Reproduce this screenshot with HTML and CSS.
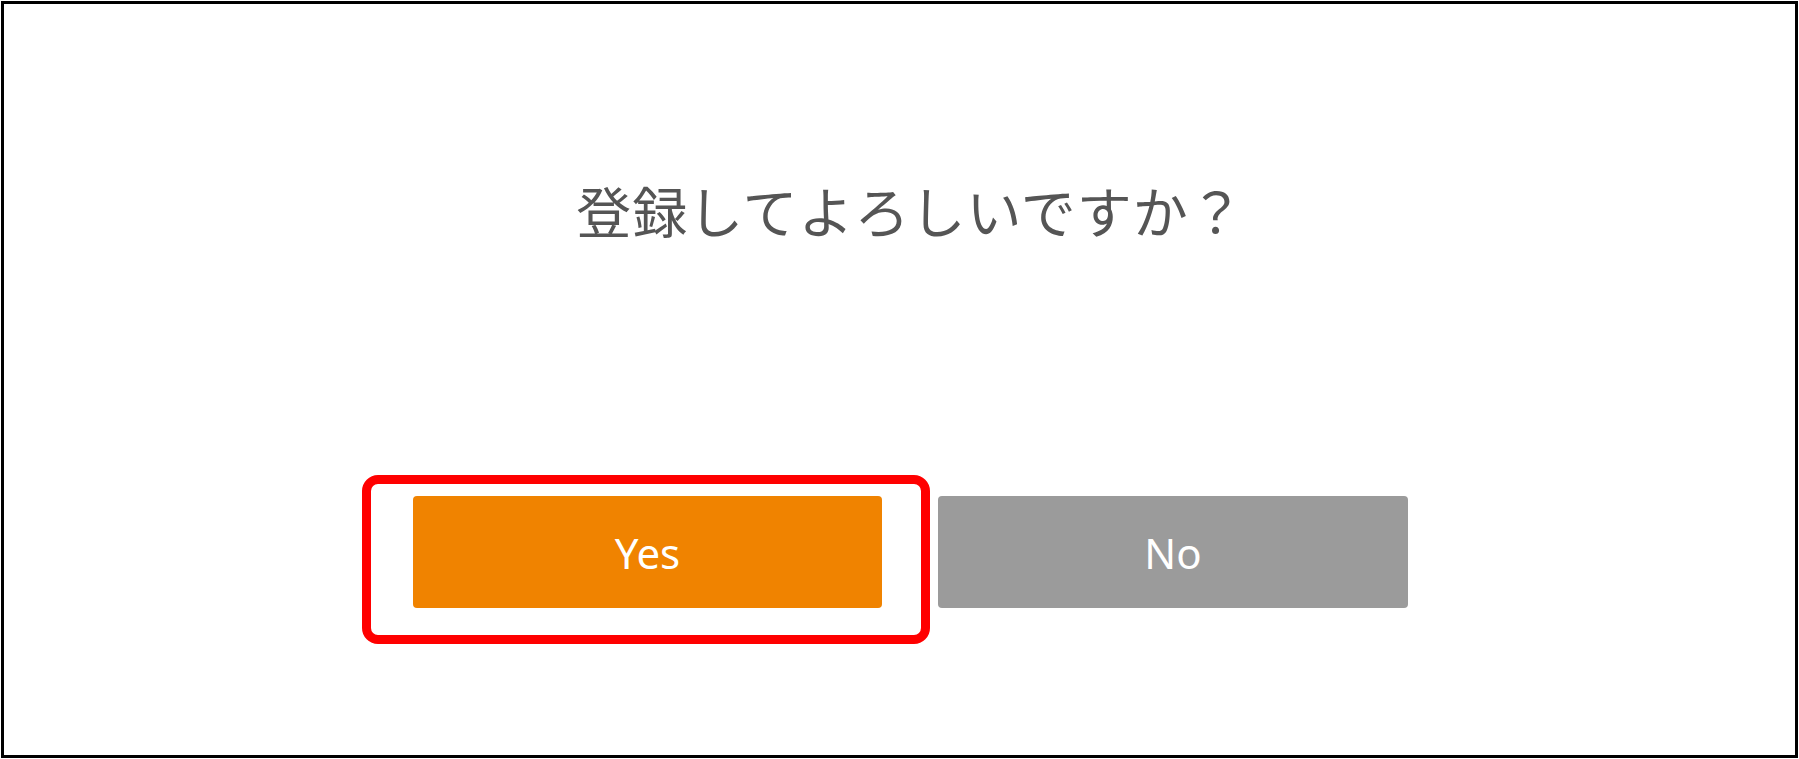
FILE: index.html
```html
<!DOCTYPE html>
<html lang="ja">
<head>
    <meta charset="UTF-8">
    <meta name="viewport" content="width=device-width, initial-scale=1.0">
    <title>登録確認</title>
    <link rel="stylesheet" href="styles.css">
</head>
<body>
    <div class="frame">
        <p class="message">登録してよろしいですか？</p>
        <div class="actions">
            <div class="btn-wrap">
                <button class="btn btn-yes" type="button">Yes</button>
                <span class="highlight"></span>
            </div>
            <button class="btn btn-no" type="button">No</button>
        </div>
    </div>
</body>
</html>
```

FILE: styles.css
```css
html, body {
    margin: 0;
    height: 100%;
    background: #fff;
}
.frame {
    box-sizing: border-box;
    height: 757px;
    margin: 1px;
    border: 3px solid #000;
    padding-left: 22px;
    display: flex;
    flex-direction: column;
    align-items: center;
}
.message {
    margin: 177px 0 0;
    font-family: "Noto Sans CJK JP", "Noto Sans", sans-serif;
    font-size: 55px;
    line-height: 56px;
    letter-spacing: 1px;
    color: #555;
}
.actions {
    display: flex;
    gap: 56px;
    margin-top: 259px;
}
.btn-wrap {
    position: relative;
}
.btn {
    display: block;
    height: 112px;
    border: 0;
    border-radius: 4px;
    color: #fff;
    font-family: "Noto Sans", "Open Sans", sans-serif;
    font-size: 42px;
    padding: 0;
    cursor: pointer;
}
.btn-yes {
    width: 469px;
    background: #f08300;
}
.btn-no {
    width: 470px;
    background: #9b9b9b;
}
.highlight {
    position: absolute;
    top: -21px;
    left: -51px;
    right: -48px;
    bottom: -36px;
    border: 9px solid #ff0000;
    border-radius: 16px;
    pointer-events: none;
}
```
